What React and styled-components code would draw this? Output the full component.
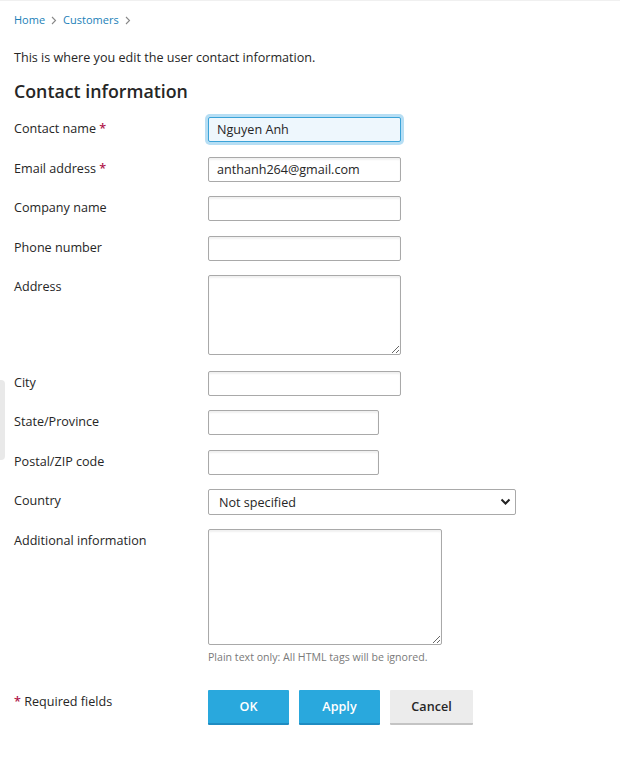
import React from "react";
import styled, { createGlobalStyle } from "styled-components";

// edit page for a customer's contact details
const GlobalStyle = createGlobalStyle`
  body {
    margin: 0;
    background: #fff;
    font-family: "Open Sans", "Noto Sans", sans-serif;
    color: #262626;
  }
`;

const Chevron = () => (
  <svg width="6" height="9" viewBox="0 0 6 9">
    <path d="M1 1l3.5 3.5L1 8" fill="none" stroke="#888" strokeWidth="1.1" />
  </svg>
);

const fields = [
  { label: "Contact name", required: true, value: "Nguyen Anh", focused: true },
  { label: "Email address", required: true, value: "anthanh264@gmail.com" },
  { label: "Company name" },
  { label: "Phone number" },
  { label: "Address", area: true, height: 80 },
  { label: "City" },
  { label: "State/Province", width: 171 },
  { label: "Postal/ZIP code", width: 171 },
];

const App = () => {
  return (
    <>
      <GlobalStyle />
      <Page>
        <SideTab />
        <Crumbs>
          <Crumb>Home</Crumb>
          <Chevron />
          <Crumb>Customers</Crumb>
          <Chevron />
        </Crumbs>
        <Intro>This is where you edit the user contact information.</Intro>
        <Heading>Contact information</Heading>
        <Form>
          {fields.map((f) => (
            <Row key={f.label} $gap={f.area ? 15.5 : 14.5}>
              <Label>
                {f.label}
                {f.required && <Star> *</Star>}
              </Label>
              {f.area ? (
                <Area $w={193} $h={f.height} />
              ) : (
                <Input
                  $w={f.width || 193}
                  $focused={f.focused}
                  defaultValue={f.value || ""}
                />
              )}
            </Row>
          ))}
          <Row $gap={14}>
            <Label>Country</Label>
            <SelectWrap>
              <Select defaultValue="none">
                <option value="none">Not specified</option>
              </Select>
              <SelectArrow width="11" height="8" viewBox="0 0 11 8">
                <path d="M1.5 1.5l4 4 4-4" fill="none" stroke="#222" strokeWidth="2" />
              </SelectArrow>
            </SelectWrap>
          </Row>
          <Row $gap={25}>
            <Label>Additional information</Label>
            <div>
              <Area $w={234} $h={116} />
              <Hint>Plain text only: All HTML tags will be ignored.</Hint>
            </div>
          </Row>
          <Row $gap={0}>
            <Label>
              <Star>*</Star> Required fields
            </Label>
            <Buttons>
              <Button $primary>OK</Button>
              <Button $primary>Apply</Button>
              <Button>Cancel</Button>
            </Buttons>
          </Row>
        </Form>
      </Page>
    </>
  );
};

const Page = styled.div`
  position: relative;
  border-top: 1px solid #f0f0f0;
  padding: 11px 14px 40px;
  min-height: 720px;
`;

const SideTab = styled.div`
  position: absolute;
  left: 0;
  top: 379px;
  width: 5px;
  height: 80px;
  background: #e9e9e9;
  border-radius: 0 4px 4px 0;
`;

const Crumbs = styled.div`
  display: flex;
  align-items: center;
  gap: 6px;
  font-size: 11px;
  line-height: 16px;
`;

const Crumb = styled.span`
  color: #1b7fb8;
  cursor: pointer;
`;

const Intro = styled.p`
  margin: 21px 0 0;
  font-size: 12.6px;
  line-height: 18px;
`;

const Heading = styled.h2`
  margin: 11px 0 0;
  font-size: 17.8px;
  line-height: 26px;
  font-weight: 600;
`;

const Form = styled.div`
  margin-top: 13px;
`;

const Row = styled.div`
  display: grid;
  grid-template-columns: 194px auto;
  align-items: start;
  margin-bottom: ${(p) => p.$gap}px;
`;

const Label = styled.div`
  font-size: 12.6px;
  line-height: 18px;
  padding-top: 3px;
`;

const Star = styled.span`
  color: #b0174b;
  font-weight: 600;
`;

const fieldBase = `
  box-sizing: border-box;
  border: 1px solid #a9a9a9;
  border-radius: 2px;
  box-shadow: inset 0 2px 2px rgba(0, 0, 0, 0.06);
  font-family: "Open Sans", "Noto Sans", sans-serif;
  font-size: 12.6px;
  color: #262626;
  background: #fff;
  outline: none;
`;

const Input = styled.input`
  ${fieldBase}
  display: block;
  width: ${(p) => p.$w}px;
  height: 25px;
  padding: 0 8px;
  ${(p) =>
    p.$focused &&
    `
    border-color: #3ba3d8;
    background: #eef7fd;
    box-shadow: 0 0 0 3px #b6def4;
  `}
`;

const Area = styled.textarea`
  ${fieldBase}
  display: block;
  width: ${(p) => p.$w}px;
  height: ${(p) => p.$h}px;
  padding: 4px 8px;
  resize: both;
`;

const SelectWrap = styled.div`
  position: relative;
  width: 308px;
`;

const Select = styled.select`
  ${fieldBase}
  appearance: none;
  display: block;
  width: 100%;
  height: 26px;
  padding: 0 10px;
  box-shadow: none;
`;

const SelectArrow = styled.svg`
  position: absolute;
  right: 5px;
  top: 9px;
  pointer-events: none;
`;

const Hint = styled.div`
  margin-top: 5px;
  font-size: 10.6px;
  line-height: 15px;
  color: #7a7a7a;
`;

const Buttons = styled.div`
  display: flex;
  gap: 10px;
`;

const Button = styled.button`
  box-sizing: border-box;
  width: ${(p) => (p.$primary ? 81 : 83)}px;
  height: 35px;
  border: none;
  border-radius: 1px;
  border-bottom: 2px solid ${(p) => (p.$primary ? "#1f8cc2" : "#c4c4c4")};
  background: ${(p) => (p.$primary ? "#29a8dd" : "#ececec")};
  color: ${(p) => (p.$primary ? "#fff" : "#262626")};
  font-family: "Open Sans", "Noto Sans", sans-serif;
  font-size: 12.6px;
  font-weight: 600;
  cursor: pointer;
`;

export default App;
